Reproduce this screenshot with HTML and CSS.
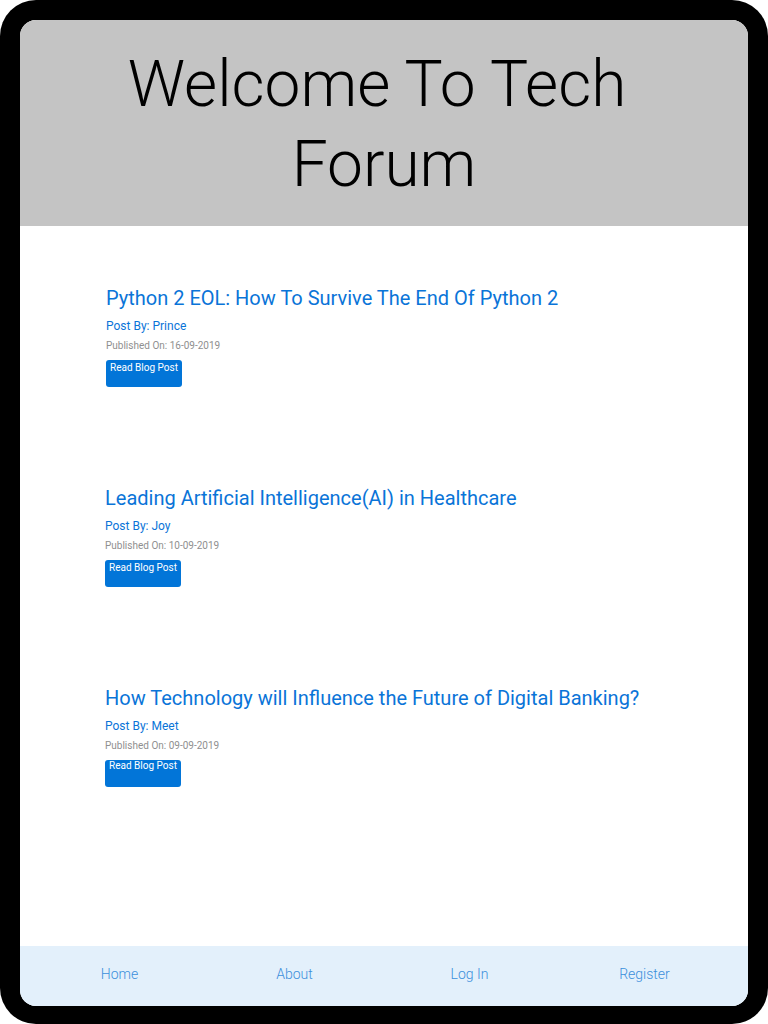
FILE: index.html
```html
<!DOCTYPE html>
<html lang="en">
<head>
<meta charset="utf-8">
<title>Tech Forum</title>
<link rel="stylesheet" href="styles.css">
</head>
<body>
<div class="device">
  <div class="screen">
    <header class="hero">
      <h1 class="hero-title"><span class="hero-line hero-line-first">Welcome To Tech</span><span class="hero-line">Forum</span></h1>
    </header>
    <main class="posts">
      <article class="post post-first">
        <h2 class="post-title">Python 2 EOL: How To Survive The End Of Python 2</h2>
        <p class="post-author">Post By: Prince</p>
        <p class="post-date">Published On: 16-09-2019</p>
        <a class="post-btn" href="#">Read Blog Post</a>
      </article>
      <article class="post">
        <h2 class="post-title">Leading Artificial Intelligence(AI) in Healthcare</h2>
        <p class="post-author">Post By: Joy</p>
        <p class="post-date">Published On: 10-09-2019</p>
        <a class="post-btn" href="#">Read Blog Post</a>
      </article>
      <article class="post">
        <h2 class="post-title">How Technology will Influence the Future of Digital Banking?</h2>
        <p class="post-author">Post By: Meet</p>
        <p class="post-date">Published On: 09-09-2019</p>
        <a class="post-btn post-btn-low" href="#">Read Blog Post</a>
      </article>
    </main>
    <nav class="bottom-nav">
      <a class="nav-link" href="#">Home</a>
      <a class="nav-link" href="#">About</a>
      <a class="nav-link" href="#">Log In</a>
      <a class="nav-link" href="#">Register</a>
    </nav>
  </div>
</div>
</body>
</html>
```

FILE: styles.css
```css
* { box-sizing: border-box; }
html, body { margin: 0; padding: 0; background: #ffffff; }
body { font-family: Roboto, "Liberation Sans", sans-serif; }

.device {
  width: 768px;
  height: 1024px;
  background: #000000;
  border-radius: 36px;
  padding: 20px 20px 18px 20px;
}

.screen {
  height: 986px;
  background: #ffffff;
  border-radius: 16px;
  overflow: hidden;
  display: flex;
  flex-direction: column;
}

.hero {
  height: 206px;
  background: #c4c4c4;
  display: flex;
  justify-content: center;
  padding-top: 25px;
}

.hero-title {
  margin: 0;
  font-family: Roboto, "Liberation Sans", sans-serif;
  font-weight: 300;
  font-size: 64px;
  line-height: 80px;
  color: #000000;
  text-align: center;
}

.hero-line { display: block; }
.hero-line-first { padding-right: 14px; }

.posts {
  flex: 1;
  padding: 60px 0 0 85px;
}

.post {
  height: 200px;
}

.post-first { padding-left: 1px; }

.post-title {
  margin: 0;
  font-weight: 400;
  font-size: 20px;
  line-height: 24px;
  color: #0a74d8;
}

.post-author {
  margin: 8px 0 0;
  font-size: 12px;
  line-height: 16px;
  color: #0a74d8;
}

.post-date {
  margin: 5px 0 0;
  font-size: 10px;
  line-height: 14px;
  color: #8f8f8f;
}

.post-btn {
  display: block;
  margin-top: 7px;
  width: 76px;
  height: 27px;
  padding-top: 2px;
  background: #0275d8;
  color: #ffffff;
  border-radius: 3px;
  font-size: 10px;
  line-height: 12px;
  text-align: center;
  text-decoration: none;
}

.post-btn-low { padding-top: 0; }

.bottom-nav {
  height: 60px;
  background: #e3f0fb;
  display: grid;
  grid-template-columns: repeat(4, 175px);
  padding-left: 12px;
  padding-bottom: 4px;
  align-items: center;
}

.nav-link {
  text-align: center;
  font-size: 14px;
  font-weight: 300;
  color: #3b8fdc;
  text-decoration: none;
}
```
